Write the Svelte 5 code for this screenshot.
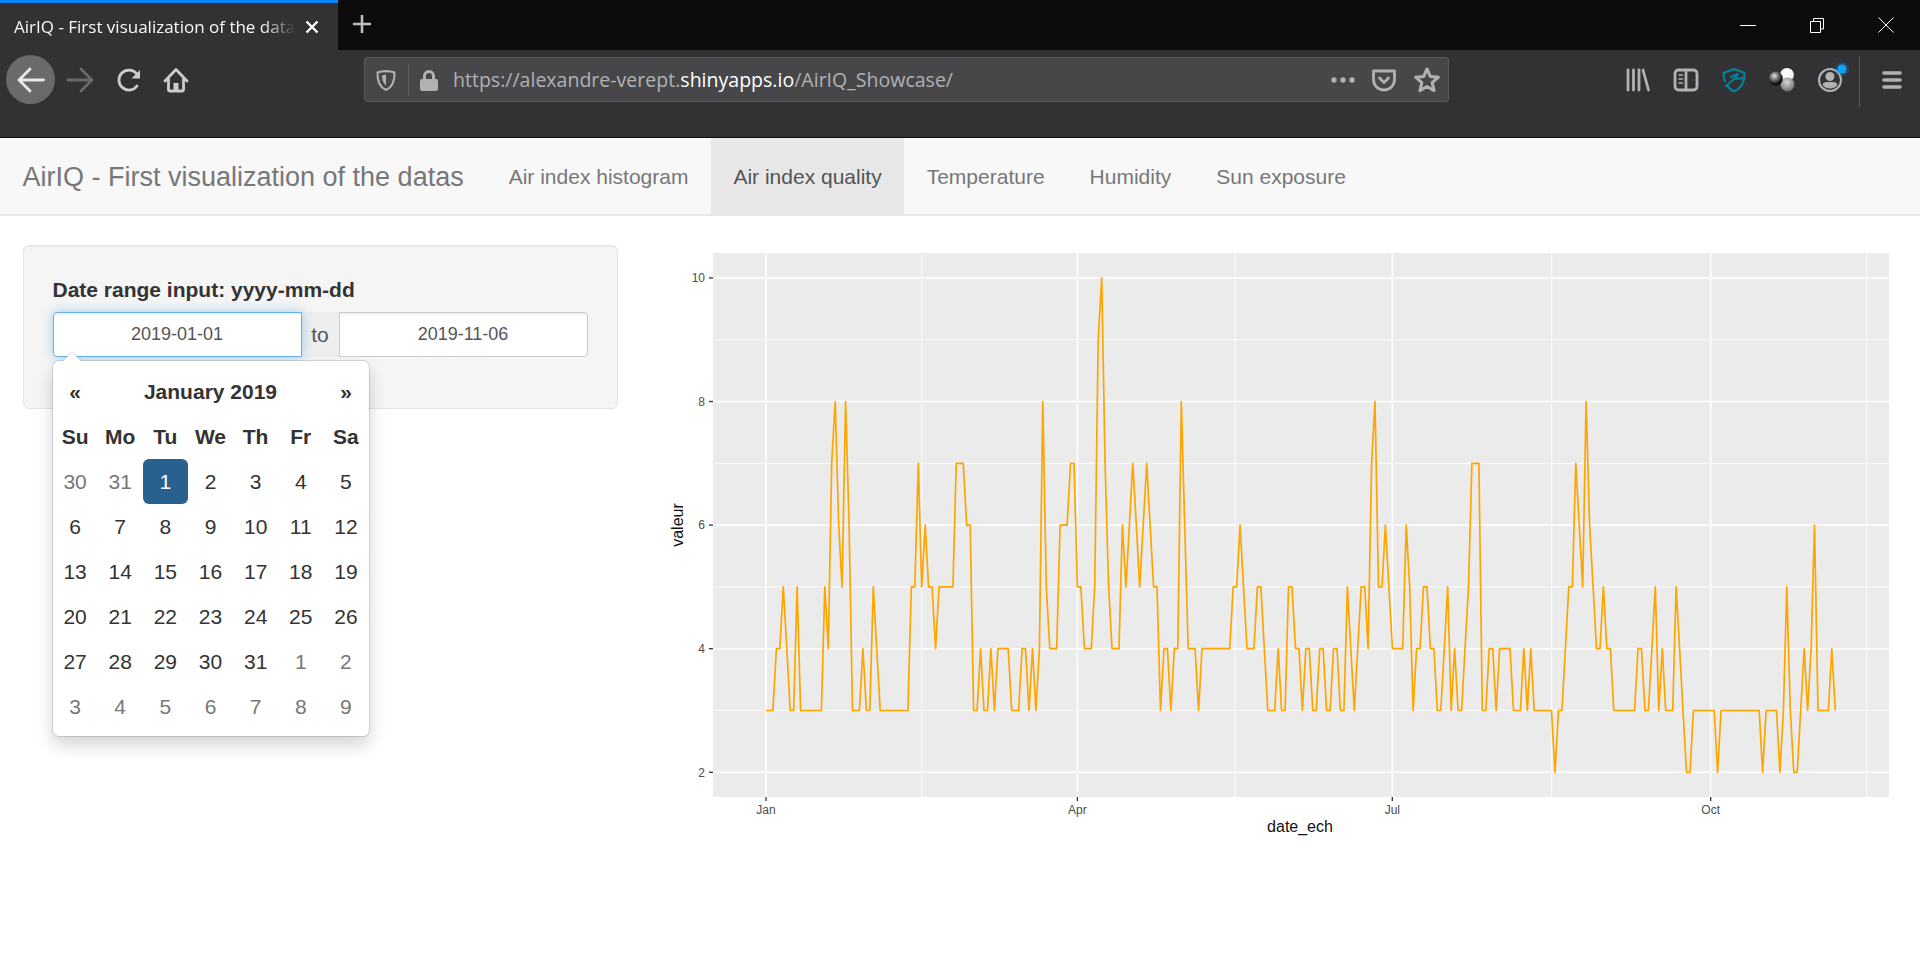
<script>
  const series = [
    3,3,3,4,4,5,4,3,3,5, 3,3,3,3,3,3,3,5,4,7, 8,6,5,8,6,3,3,3,4,3, 3,5,4,3,3,3,3,3,3,3,
    3,3,5,5,7,5,6,5,5,4, 5,5,5,5,5,7,7,7,6,6, 3,3,4,3,3,4,3,4,4,4, 4,3,3,3,4,4,3,4,3,4,
    8,5,4,4,4,6,6,6,7,7, 5,5,4,4,4,5,9,10,7,5, 4,4,4,6,5,6,7,6,5,6, 7,6,5,5,3,4,4,3,4,4,
    8,6,4,4,4,3,4,4,4,4, 4,4,4,4,4,5,5,6,5,4, 4,4,5,5,4,3,3,3,4,3, 3,5,5,4,4,3,4,4,3,3,
    4,4,3,3,4,4,3,3,5,4, 3,4,5,5,4,7,8,5,5,6, 5,4,4,4,4,6,5,3,4,4, 5,5,4,4,3,3,4,5,3,4,
    3,3,4,5,7,7,7,3,3,4, 4,3,4,4,4,4,3,3,3,4, 3,4,3,3,3,3,3,3,2,3, 3,4,5,5,7,6,5,8,6,5,
    4,4,5,4,4,3,3,3,3,3, 3,3,4,4,3,3,4,5,3,4, 3,3,3,5,4,3,2,2,3,3, 3,3,3,3,3,2,3,3,3,3,
    3,3,3,3,3,3,3,3,2,3, 3,3,3,2,3,5,3,2,2,3, 4,3,4,6,3,3,3,3,4,3
  ];
  const px = (i) => 766 + i * 3.4605;
  const py = (v) => 772.3 - (v - 2) * 61.8;
  const points = series.map((v, i) => `${px(i).toFixed(1)},${py(v).toFixed(1)}`).join(' ');

  const panel = { x: 713, y: 253, w: 1176, h: 544 };
  const majorY = [2, 4, 6, 8, 10];
  const minorY = [3, 5, 7, 9];
  const majorX = [
    { x: 766, label: 'Jan' },
    { x: 1077.4, label: 'Apr' },
    { x: 1392.3, label: 'Jul' },
    { x: 1710.7, label: 'Oct' }
  ];
  const minorX = [921.7, 1235, 1551.7, 1866.7];

  const tabs = ['Air index histogram', 'Air index quality', 'Temperature', 'Humidity', 'Sun exposure'];
  const weekdays = ['Su', 'Mo', 'Tu', 'We', 'Th', 'Fr', 'Sa'];
  const days = [];
  for (const d of [30, 31]) days.push({ d, muted: true });
  for (let d = 1; d <= 31; d++) days.push({ d, active: d === 1 });
  for (let d = 1; d <= 9; d++) days.push({ d, muted: true });

  const starPoints = '12,1.8 15,8.7 22.5,9.4 16.8,14.4 18.5,21.8 12,18 5.5,21.8 7.2,14.4 1.5,9.4 9,8.7';
</script>

<div class="browser">
  <div class="tabbar">
    <div class="tab">
      <span class="tab-title">AirIQ - First visualization of the datas</span>
      <svg class="tab-close" width="14" height="14" viewBox="0 0 14 14"><path d="M1.5 1.5 12.5 12.5M12.5 1.5 1.5 12.5" /></svg>
    </div>
    <svg class="new-tab" width="20" height="20" viewBox="0 0 20 20"><path d="M10 1V19M1 10H19" /></svg>
    <div class="win-controls">
      <div class="win-btn"><svg width="16" height="16" viewBox="0 0 16 16"><path d="M0 8.5H16" /></svg></div>
      <div class="win-btn"><svg width="16" height="16" viewBox="0 0 16 16"><path d="M1.5 4.5H11.5V15.5H1.5ZM4.5 4.5V1.5H14.5V12H11.5" /></svg></div>
      <div class="win-btn"><svg width="16" height="16" viewBox="0 0 16 16"><path d="M.5 .5 15.5 15.5M15.5 .5 .5 15.5" /></svg></div>
    </div>
  </div>

  <div class="toolbar">
    <div class="nav-btns">
      <div class="nav-btn back">
        <svg width="48" height="48" viewBox="0 0 48 48"><path class="ic" d="M36.5 24H12.5M23 13 12 24 23 35" /></svg>
      </div>
      <div class="nav-btn">
        <svg width="48" height="48" viewBox="0 0 48 48"><path class="ic dim" d="M12 24H35M25 13 36 24 25 35" /></svg>
      </div>
      <div class="nav-btn">
        <svg width="48" height="48" viewBox="0 0 48 48"><path class="ic soft" d="M32 30A10 10 0 1 1 31.5 17.5" /><path class="fill-soft" d="M35 14V22.5H26.5Z" /></svg>
      </div>
      <div class="nav-btn home">
        <svg width="48" height="48" viewBox="0 0 48 48"><path class="ic soft" d="M13 25 24 13.5 35 25M16.5 23V33.5Q16.5 35 18 35H30Q31.5 35 31.5 33.5V23" /><path class="fill-soft" d="M21.5 27H26.5V35H21.5Z" /></svg>
      </div>
    </div>

    <div class="urlbar">
      <svg class="u-shield" width="24" height="24" viewBox="0 0 24 24"><path class="ic gray thin" d="M3.5 4.5C8 2.6 16 2.6 20.5 4.5 20.8 13 18 19.5 12 22 6 19.5 3.2 13 3.5 4.5Z" /><path class="fill-gray" d="M12 6.5V17.5C9.5 15.5 8 12 8 7.5Z" /></svg>
      <span class="u-sep"></span>
      <svg class="u-lock" width="20" height="24" viewBox="0 0 20 24"><path class="fill-gray" d="M1 13Q1 11 3 11H4V8A6 6 0 0 1 16 8V11H17Q19 11 19 13V21Q19 23 17 23H3Q1 23 1 21ZM7 11H13V8A3 3 0 0 0 7 8Z" fill-rule="evenodd" /></svg>
      <span class="url">https://alexandre-verept.<b>shinyapps.io</b>/AirIQ_Showcase/</span>
      <svg class="u-dots" width="26" height="8" viewBox="0 0 26 8"><circle cx="4" cy="4" r="2.7" /><circle cx="13" cy="4" r="2.7" /><circle cx="22" cy="4" r="2.7" /></svg>
      <svg class="u-pocket" width="26" height="26" viewBox="0 0 26 26"><path class="ic gray" d="M2.5 4H23.5V12.5A10.5 10.5 0 0 1 2.5 12.5Z" /><path class="ic gray" d="M8.5 11 13 15.5 17.5 11" /></svg>
      <svg class="u-star" width="26" height="26" viewBox="0 0 24 24"><polygon class="ic gray" points={starPoints} /></svg>
    </div>

    <div class="tools">
      <div class="tool"><svg width="26" height="26" viewBox="0 0 26 26"><path class="ic gray" d="M3 3V23M8.5 3V23M14 3V23M18 3 23.5 23" /></svg></div>
      <div class="tool"><svg width="26" height="26" viewBox="0 0 26 26"><rect class="ic gray" x="2" y="3" width="22" height="20" rx="3.5" /><path class="ic gray" d="M13 3V23" /><path class="ic gray narrow" d="M6 8H9.5M6 12H9.5M6 16H9.5" /></svg></div>
      <div class="tool"><svg width="26" height="26" viewBox="0 0 26 26"><path class="ic teal" d="M2.5 6 13 2 23.5 6C23.8 14 20 21 13 24.5 10 23 7.5 21 6 18" /><path class="ic teal" d="M2.5 6C2.5 9 3 12 4 14.5M5 19 13 12 23 11M10 10 17 7 14 11.5" /></svg></div>
      <div class="tool">
        <svg width="30" height="30" viewBox="0 0 30 30">
          <defs>
            <radialGradient id="sphW" cx=".4" cy=".35" r=".7"><stop offset="0" stop-color="#fff" /><stop offset=".75" stop-color="#f4f4f4" /><stop offset="1" stop-color="#aaa" /></radialGradient>
            <radialGradient id="sphG" cx=".45" cy=".35" r=".7"><stop offset="0" stop-color="#d8d8d8" /><stop offset=".7" stop-color="#8a8a8a" /><stop offset="1" stop-color="#5a5a5a" /></radialGradient>
            <radialGradient id="sphD" cx=".4" cy=".32" r=".75"><stop offset="0" stop-color="#e4e4e4" /><stop offset=".35" stop-color="#7c7c7c" /><stop offset=".7" stop-color="#1e1e1e" /><stop offset="1" stop-color="#000" /></radialGradient>
          </defs>
          <circle cx="20" cy="10" r="7" fill="url(#sphW)" />
          <circle cx="20.5" cy="19.5" r="7" fill="url(#sphG)" />
          <circle cx="8.8" cy="13.5" r="7" fill="url(#sphD)" />
        </svg>
      </div>
      <div class="tool">
        <svg width="40" height="40" viewBox="0 0 40 40">
          <circle class="ic gray thin" cx="20" cy="20" r="11" />
          <circle class="fill-gray" cx="20" cy="16.5" r="4.5" />
          <path class="fill-gray" d="M12.5 25Q13 22 17 22H23Q27 22 27.5 25 24.5 28.5 20 28.5 15.5 28.5 12.5 25Z" />
          <circle class="blue-glow" cx="32" cy="9" r="7" />
          <circle class="blue-dot" cx="32" cy="9" r="4.5" />
        </svg>
      </div>
    </div>
    <span class="tool-sep"></span>
    <svg class="menu" width="20" height="20" viewBox="0 0 20 20"><path class="ic gray fat" d="M2 3H18M2 10H18M2 17H18" /></svg>
  </div>
</div>

<nav class="navbar">
  <span class="brand">AirIQ - First visualization of the datas</span>
  {#each tabs as t}
    <span class="nav-item" class:active={t === 'Air index quality'}>{t}</span>
  {/each}
</nav>

<main class="content">
  <aside class="sidebar">
    <div class="well">
      <div class="label">Date range input: yyyy-mm-dd</div>
      <div class="range">
        <div class="input focus">2019-01-01</div>
        <div class="addon">to</div>
        <div class="input second">2019-11-06</div>
        <div class="calendar">
          <div class="cal-head">
            <span>«</span>
            <span class="month">January 2019</span>
            <span>»</span>
          </div>
          <div class="cal-grid">
            {#each weekdays as w}
              <span class="cell dow">{w}</span>
            {/each}
            {#each days as day}
              <span class="cell" class:muted={day.muted} class:sel={day.active}>{day.d}</span>
            {/each}
          </div>
        </div>
      </div>
    </div>
  </aside>

  <svg class="chart" width="1280" height="600" viewBox="640 245 1280 600">
    <rect x={panel.x} y={panel.y} width={panel.w} height={panel.h} fill="#ebebeb" />
    {#each minorY as v}
      <line class="grid-minor" x1={panel.x} x2={panel.x + panel.w} y1={py(v)} y2={py(v)} />
    {/each}
    {#each minorX as x}
      <line class="grid-minor" x1={x} x2={x} y1={panel.y} y2={panel.y + panel.h} />
    {/each}
    {#each majorY as v}
      <line class="grid-major" x1={panel.x} x2={panel.x + panel.w} y1={py(v)} y2={py(v)} />
      <line class="tick" x1={panel.x - 4} x2={panel.x} y1={py(v)} y2={py(v)} />
      <text class="tick-label" x="705" y={py(v) + 4.2} text-anchor="end">{v}</text>
    {/each}
    {#each majorX as m}
      <line class="grid-major" x1={m.x} x2={m.x} y1={panel.y} y2={panel.y + panel.h} />
      <line class="tick" x1={m.x} x2={m.x} y1={panel.y + panel.h} y2={panel.y + panel.h + 4} />
      <text class="tick-label" x={m.x} y="814" text-anchor="middle">{m.label}</text>
    {/each}
    <polyline class="line" {points} />
    <text class="axis-title" x="1300" y="832" text-anchor="middle">date_ech</text>
    <text class="axis-title" transform="translate(682.5 525) rotate(-90)" text-anchor="middle">valeur</text>
  </svg>
</main>

<style>
  :global(body) {
    margin: 0;
    background: #fff;
    font-family: "Liberation Sans", Arial, sans-serif;
    overflow: hidden;
  }

  /* browser chrome */
  .browser { background: #323234; }
  .tabbar {
    height: 50px;
    background: #0c0c0d;
    display: flex;
    align-items: center;
  }
  .tab {
    width: 338px;
    height: 50px;
    box-sizing: border-box;
    background: #323234;
    border-top: 3px solid #0a84ff;
    padding: 0 19px 0 14px;
    display: flex;
    align-items: center;
    gap: 9px;
    color: #f9f9fa;
    font-family: "Open Sans", sans-serif;
    font-size: 17px;
  }
  .tab-title {
    flex: 1;
    min-width: 0;
    white-space: nowrap;
    overflow: hidden;
    -webkit-mask-image: linear-gradient(to right, #000 88%, transparent 100%);
    mask-image: linear-gradient(to right, #000 88%, transparent 100%);
  }
  .tab-close { flex: none; }
  .tab-close path { stroke: #fff; stroke-width: 2.4; fill: none; }
  .new-tab { margin: -3px 0 0 14px; }
  .new-tab path { stroke: #bdbdbd; stroke-width: 2.6; fill: none; }
  .win-controls { margin-left: auto; display: flex; height: 46px; }
  .win-btn { width: 69px; display: flex; align-items: center; justify-content: center; }
  .win-btn path { stroke: #fff; stroke-width: 1; fill: none; }

  .toolbar {
    height: 88px;
    box-sizing: border-box;
    border-bottom: 1px solid #0c0c0d;
    display: flex;
    align-items: flex-start;
    padding: 7px 0 0 6px;
    background: #323234;
  }
  .nav-btns { display: flex; width: 196px; margin-top: -2px; }
  .nav-btn {
    width: 49px;
    height: 49px;
    flex: none;
    display: flex;
    align-items: center;
    justify-content: center;
    border-radius: 50%;
  }
  .nav-btn.home { margin-left: -2px; }
  .back { background: #6a6a6b; }
  .ic {
    fill: none;
    stroke: #e8e8e8;
    stroke-width: 2.8;
    stroke-linecap: round;
    stroke-linejoin: round;
  }
  .ic.dim { stroke: #6a6a6c; }
  .ic.soft { stroke: #cccccc; }
  .ic.gray { stroke: #b1b1b3; }
  .ic.teal { stroke: #00849f; stroke-width: 2; }
  .ic.thin { stroke-width: 2.1; }
  .ic.narrow { stroke-width: 1.6; }
  .ic.fat { stroke-width: 3.6; }
  .fill-soft { fill: #cccccc; }
  .fill-gray { fill: #b1b1b3; }

  .urlbar {
    width: 1085px;
    height: 45px;
    box-sizing: border-box;
    margin-left: 162px;
    background: #474749;
    border: 1px solid #5a5a5c;
    border-radius: 3px;
    display: flex;
    align-items: center;
    padding-left: 9px;
  }
  .u-sep { width: 1px; height: 32px; background: #5f5f61; margin: 0 9px 0 10px; }
  .u-lock { margin: 0 14px 0 1px; flex: none; }
  .url {
    flex: 1;
    color: #b1b1b3;
    font-family: "Open Sans", sans-serif;
    font-size: 19.55px;
    white-space: nowrap;
  }
  .url b { color: #fff; font-weight: 400; }
  .u-dots { fill: #b1b1b3; margin-right: 15px; }
  .u-pocket { margin-right: 17px; }
  .u-star { margin-right: 8px; }

  .tools { display: flex; margin-left: 165px; margin-top: -1px; }
  .tool {
    width: 48px;
    height: 48px;
    display: flex;
    align-items: center;
    justify-content: center;
  }
  .blue-glow { fill: #0a84ff; opacity: .25; }
  .blue-dot { fill: #0ea5f5; }
  .tool-sep { width: 1px; height: 51px; background: #59595b; margin: -1px 0 0 5px; }
  .menu { margin: 13px 0 0 22px; }

  /* navbar */
  .navbar {
    height: 78px;
    box-sizing: border-box;
    background: #f8f8f8;
    border-bottom: 2px solid #e7e7e7;
    display: flex;
    align-items: stretch;
    color: #777;
    font-size: 21px;
    margin-bottom: 29px;
  }
  .brand {
    font-size: 27px;
    padding: 2px 22.5px 0;
    display: flex;
    align-items: center;
  }
  .nav-item {
    padding: 2px 22.5px 0;
    display: flex;
    align-items: center;
  }
  .nav-item.active { background: #e7e7e7; color: #555; }

  /* content */
  .content { display: grid; grid-template-columns: 640px 1fr; }
  .sidebar { padding-left: 23px; width: 595px; }
  .well {
    height: 164px;
    box-sizing: border-box;
    background: #f5f5f5;
    border: 1px solid #e3e3e3;
    border-radius: 6px;
    padding: 29px 28.5px 0;
    box-shadow: inset 0 1px 1px rgba(0, 0, 0, .05);
  }
  .label {
    font-size: 21px;
    font-weight: 700;
    color: #333;
    line-height: 30px;
    margin-bottom: 7px;
  }
  .range {
    display: flex;
    height: 45px;
    width: 535px;
    position: relative;
  }
  .input {
    width: 249px;
    box-sizing: border-box;
    background: #fff;
    border: 1.5px solid #ccc;
    display: flex;
    align-items: center;
    justify-content: center;
    font-size: 18px;
    color: #555;
    box-shadow: inset 0 1.5px 1.5px rgba(0, 0, 0, .075);
  }
  .input.focus {
    border-color: #66afe9;
    border-radius: 4px 0 0 4px;
    box-shadow: inset 0 1.5px 1.5px rgba(0, 0, 0, .075), 0 0 12px rgba(102, 175, 233, .6);
    position: relative;
  }
  .input.second { border-radius: 0 4px 4px 0; }
  .addon {
    width: 37px;
    background: #eee;
    display: flex;
    align-items: center;
    justify-content: center;
    font-size: 21px;
    color: #555;
  }

  .calendar {
    position: absolute;
    left: 0;
    top: 49px;
    width: 316px;
    height: 375px;
    box-sizing: border-box;
    background: #fff;
    border-radius: 6px;
    padding-top: 8px;
    box-shadow: 0 0 0 1px rgba(0, 0, 0, .12), 0 9px 18px rgba(0, 0, 0, .175);
    color: #333;
    font-size: 21px;
    z-index: 2;
  }
  .calendar::before {
    content: "";
    position: absolute;
    left: 9px;
    top: -10px;
    border-left: 10.5px solid transparent;
    border-right: 10.5px solid transparent;
    border-bottom: 10.5px solid rgba(0, 0, 0, .15);
  }
  .calendar::after {
    content: "";
    position: absolute;
    left: 10.5px;
    top: -9px;
    border-left: 9px solid transparent;
    border-right: 9px solid transparent;
    border-bottom: 9px solid #fff;
  }
  .cal-head {
    display: grid;
    grid-template-columns: 45px 1fr 45px;
    height: 45px;
    align-items: center;
    text-align: center;
    font-weight: 700;
  }
  .cal-grid { display: grid; grid-template-columns: repeat(7, 1fr); grid-auto-rows: 45px; }
  .cell {
    display: flex;
    align-items: center;
    justify-content: center;
    border-radius: 6px;
  }
  .dow { font-weight: 700; }
  .muted { color: #777; }
  .sel { background: #286090; color: #fff; }

  /* chart */
  .chart { display: block; }
  .grid-major { stroke: #fff; stroke-width: 1.5; }
  .grid-minor { stroke: #fff; stroke-width: .8; }
  .tick { stroke: #333; stroke-width: 1.3; }
  .tick-label { fill: #4d4d4d; font-size: 12px; font-family: "Liberation Sans", sans-serif; }
  .axis-title { fill: #111; font-size: 16px; font-family: "Liberation Sans", sans-serif; }
  .line {
    fill: none;
    stroke: #ffa500;
    stroke-width: 1.7;
    stroke-linejoin: round;
  }
</style>
